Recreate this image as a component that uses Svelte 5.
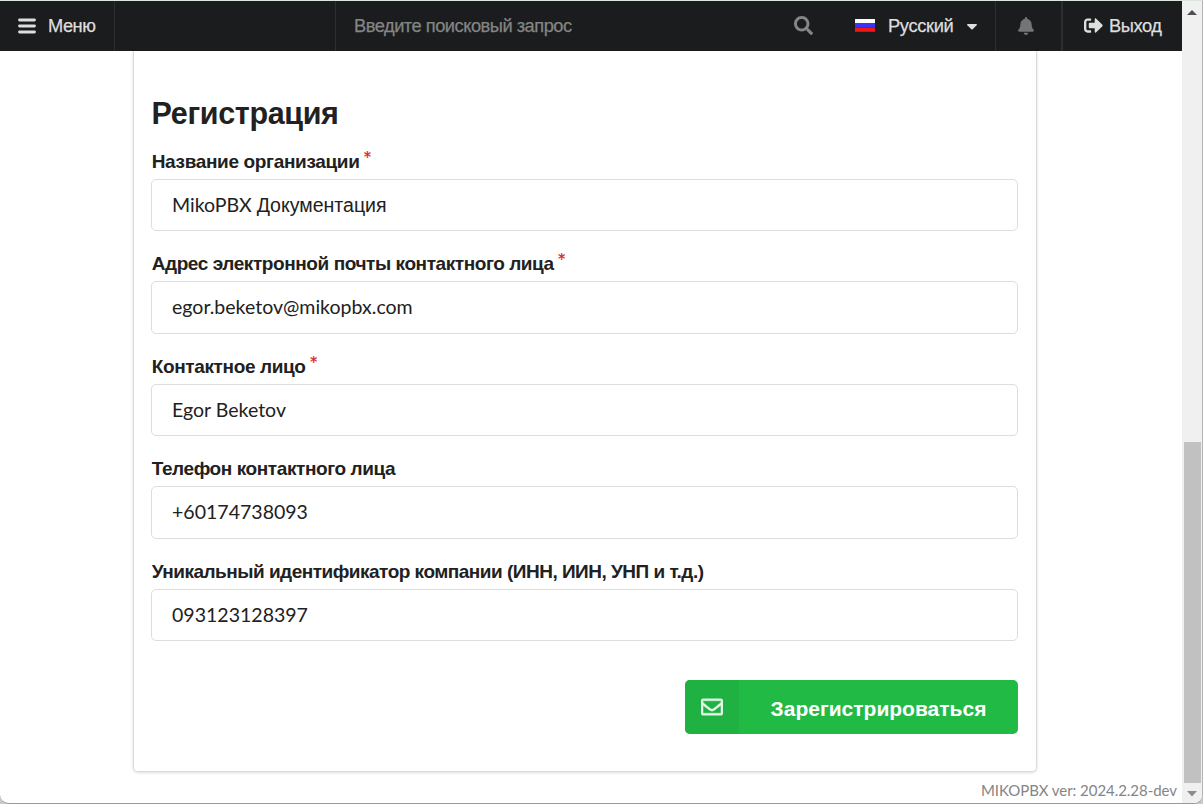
<script>
  const fields = [
    { label: 'Название организации', required: true, latin: 'MikoPBX ', cyr: 'Документация', fit: 'name' },
    { label: 'Адрес электронной почты контактного лица', required: true, latin: 'egor.beketov@mikopbx.com', cyr: '', fit: 'email' },
    { label: 'Контактное лицо', required: true, latin: 'Egor Beketov', cyr: '', fit: 'contact' },
    { label: 'Телефон контактного лица', required: false, latin: '+60174738093', cyr: '', fit: 'phone' },
    { label: 'Уникальный идентификатор компании (ИНН, ИИН, УНП и т.д.)', required: false, latin: '093123128397', cyr: '', fit: 'inn' }
  ];
</script>

<div class="window">
  <div class="page">
    <header>
      <div class="item menu">
        <svg width="18" height="16" viewBox="0 0 18 16"><path d="M1.500 2h15M1.500 8h15M1.500 14h15" stroke="#dedede" stroke-width="2.800" stroke-linecap="round" /></svg>
        <span>Меню</span>
      </div>
      <div class="item blank"></div>
      <div class="item search">
        <span>Введите поисковый запрос</span>
        <svg width="19" height="19" viewBox="0 0 512 512"><path fill="#848585" d="M505 442.700 405.300 343c-4.500-4.500-10.600-7-17-7H372c27.600-35.300 44-79.700 44-128C416 93.100 322.900 0 208 0S0 93.100 0 208s93.100 208 208 208c48.300 0 92.700-16.400 128-44v16.300c0 6.400 2.500 12.500 7 17l99.700 99.700c9.400 9.400 24.600 9.400 33.900 0l28.300-28.300c9.400-9.400 9.400-24.600.1-34zM208 336c-70.700 0-128-57.200-128-128 0-70.700 57.200-128 128-128 70.700 0 128 57.200 128 128 0 70.700-57.200 128-128 128z" /></svg>
      </div>
      <div class="item lang">
        <svg width="20" height="13" viewBox="0 0 20 13"><path fill="#fff" d="M0 0h20v4H0z" /><path fill="#3a35f5" d="M0 4h20v5H0z" /><path fill="#f01818" d="M0 9h20v4H0z" /><path fill="#000" opacity=".15" d="M0 12h20v1H0zM0 8h20v1H0z" /></svg>
        <span>Русский</span>
        <svg class="caret" width="10" height="6" viewBox="0 0 10 6"><path d="M.7 0h8.600q1 .3.300 1.200L5.700 5.200q-.7.6-1.400 0L.4 1.200Q-.2.300.7 0z" fill="#dedede" /></svg>
      </div>
      <div class="item bell">
        <svg width="16" height="18" viewBox="0 0 448 512"><path fill="#747575" d="M224 512c35.320 0 63.970-28.650 63.970-64H160.030c0 35.350 28.650 64 63.970 64zm215.390-149.710c-19.320-20.760-55.470-51.990-55.470-154.290 0-77.700-54.480-139.900-127.940-155.160V32c0-17.670-14.320-32-31.980-32s-31.980 14.330-31.980 32v20.840C118.560 68.100 64.080 130.300 64.080 208c0 102.300-36.150 133.530-55.470 154.290-6 6.450-8.660 14.160-8.610 21.710.11 16.400 12.980 32 32.100 32h383.800c19.120 0 32-15.600 32.100-32 .05-7.550-2.610-15.270-8.610-21.710z" /></svg>
      </div>
      <div class="item exit">
        <svg width="19" height="19" viewBox="0 0 512 512"><path fill="#dedede" d="M497 273L329 441c-15 15-41 4.500-41-17v-96H152c-13.300 0-24-10.700-24-24v-96c0-13.300 10.700-24 24-24h136V88c0-21.400 25.900-32 41-17l168 168c9.300 9.400 9.300 24.600 0 34zM192 436v-40c0-6.600-5.400-12-12-12H96c-17.700 0-32-14.300-32-32V160c0-17.700 14.300-32 32-32h84c6.600 0 12-5.400 12-12V76c0-6.600-5.400-12-12-12H96c-53 0-96 43-96 96v192c0 53 43 96 96 96h84c6.600 0 12-5.400 12-12z" /></svg>
        <span>Выход</span>
      </div>
    </header>

    <main>
      <h1>Регистрация</h1>
      {#each fields as f}
        <div class="field {f.fit}">
          <div class="label"><span>{f.label}</span>{#if f.required}<i>*</i>{/if}</div>
          <div class="input"><span class="latin">{f.latin}</span>{#if f.cyr}<span class="cyr">{f.cyr}</span>{/if}</div>
        </div>
      {/each}
      <div class="button">
        <div class="icon">
          <svg width="22" height="22" viewBox="0 0 512 512"><path fill="#fff" stroke="#fff" stroke-width="10" opacity=".88" d="M464 64H48C21.490 64 0 85.490 0 112v288c0 26.510 21.490 48 48 48h416c26.510 0 48-21.490 48-48V112c0-26.510-21.490-48-48-48zm0 48v40.805c-22.422 18.259-58.168 46.651-134.587 106.490-16.841 13.247-50.201 45.072-73.413 44.701-23.208.375-56.579-31.459-73.413-44.701C106.180 199.465 70.425 171.067 48 152.805V112h416zM48 400V214.398c22.914 18.251 55.409 43.862 104.938 82.646 21.857 17.205 60.134 55.186 103.062 54.955 42.717.231 80.509-37.199 103.053-54.947 49.528-38.783 82.032-64.401 104.947-82.653V400H48z" /></svg>
        </div>
        <div class="text"><span>Зарегистрироваться</span></div>
      </div>
    </main>
    <footer><span>MIKOPBX ver: 2024.2.28-dev</span></footer>
  </div>
  <aside>
    <svg width="10" height="6" viewBox="0 0 10 6"><path d="M5 0 10 5H0z" fill="#505050" /></svg>
    <div class="thumb"></div>
    <svg width="10" height="6" viewBox="0 0 10 6"><path d="M5 5.500 0 0h10z" fill="#8b8b8b" /></svg>
  </aside>
</div>

<style>
  :global(body) { background: #c9c9c9; overflow: hidden; }
  * { box-sizing: border-box; }
  span { white-space: pre; }
  .window {
    width: 1203px; height: 804px; display: flex; overflow: hidden;
    border-top: 1px solid #dce5dc; border-right: 1px solid #b3b3b3; border-bottom: 1px solid #999;
    border-radius: 0 0 9px 9px; background: #fff;
    font-family: "Liberation Sans", Arial, sans-serif; color: #212121;
  }
  .page { width: 1182px; display: flex; flex-direction: column; }
  header { height: 50px; display: flex; background: #1b1c1d; color: #dedede; font-size: 18.300px; flex: none; }
  header span { -webkit-text-stroke: .25px currentColor; }
  .item { display: flex; align-items: center; border-right: 1px solid #2d2e2f; }
  .item svg { flex: none; margin-top: -1px; }
  .menu { width: 115px; padding-left: 18px; gap: 12px; }
  .menu span { letter-spacing: -.5px; }
  .blank { width: 221px; }
  .search { width: 490px; padding-left: 18px; justify-content: space-between; padding-right: 13px; border-right: 0; color: #848585; }
  .search span { letter-spacing: -.5px; }
  .lang { width: 170px; padding-left: 29px; }
  .lang span { margin-left: 13px; width: 79px; letter-spacing: -.35px; }
  .item .caret { margin-top: 2px; }
  .bell { width: 67px; justify-content: center; border-right-width: 2px; padding-right: 5px; }
  .exit { flex: 1; border-right: 0; padding-left: 21px; gap: 6px; }
  .exit span { letter-spacing: -.45px; }
  main {
    width: 904px; height: 721px; margin-left: 133px; padding: 41px 18px 0 17px; flex: none;
    border: 1px solid #d9dadb; border-top: 0; border-radius: 0 0 5px 5px;
    box-shadow: 0 1px 3px rgba(34, 36, 38, .15);
  }
  h1 { margin: 0; height: 56px; padding-left: .6px; font-size: 30.500px; line-height: 42px; font-weight: 700; letter-spacing: -.35px; }
  .field { height: 102.450px; }
  .label { display: flex; height: 30.900px; padding-left: .7px; font-size: 19px; line-height: 27px; font-weight: 700; }
  .name .label { letter-spacing: -.34px; }
  .email .label { letter-spacing: -.42px; }
  .contact .label { letter-spacing: -.36px; }
  .phone .label { letter-spacing: -.41px; }
  .inn .label { letter-spacing: -.5px; }
  .label i { margin-left: 3.500px; margin-top: -3px; font: 400 21px/27px Lato, sans-serif; color: #db2828; -webkit-text-stroke: .2px #db2828; }
  .input {
    height: 52.400px; display: flex; align-items: baseline; padding-left: 20px;
    border: 1px solid #dcddde; border-radius: 5px; font-size: 19.550px; line-height: 49px;
  }
  .email .input { line-height: 50px; }
  .latin { font-family: Lato, sans-serif; }
  .button { display: flex; width: 333px; height: 54px; margin: 19.750px 0 0 auto; border-radius: 5px; overflow: hidden; background: #21ba45; color: #fff; }
  .icon { width: 54px; display: flex; align-items: center; justify-content: center; background: #1fb141; }
  .text { flex: 1; display: flex; align-items: center; justify-content: center; font-size: 21px; font-weight: 700; padding-top: 4px; }
  footer { display: flex; justify-content: flex-end; padding: 8px 5px 0 0; font: 15px/20px Lato, sans-serif; letter-spacing: -.04px; color: #858585; }
  aside { flex: none; width: 20px; background: #f0f0f0; display: flex; flex-direction: column; align-items: center; padding: 9px 0 6px; }
  .thumb { width: 17px; height: 341px; background: #c1c1c1; margin: 426px 0 auto; flex: none; }
</style>
